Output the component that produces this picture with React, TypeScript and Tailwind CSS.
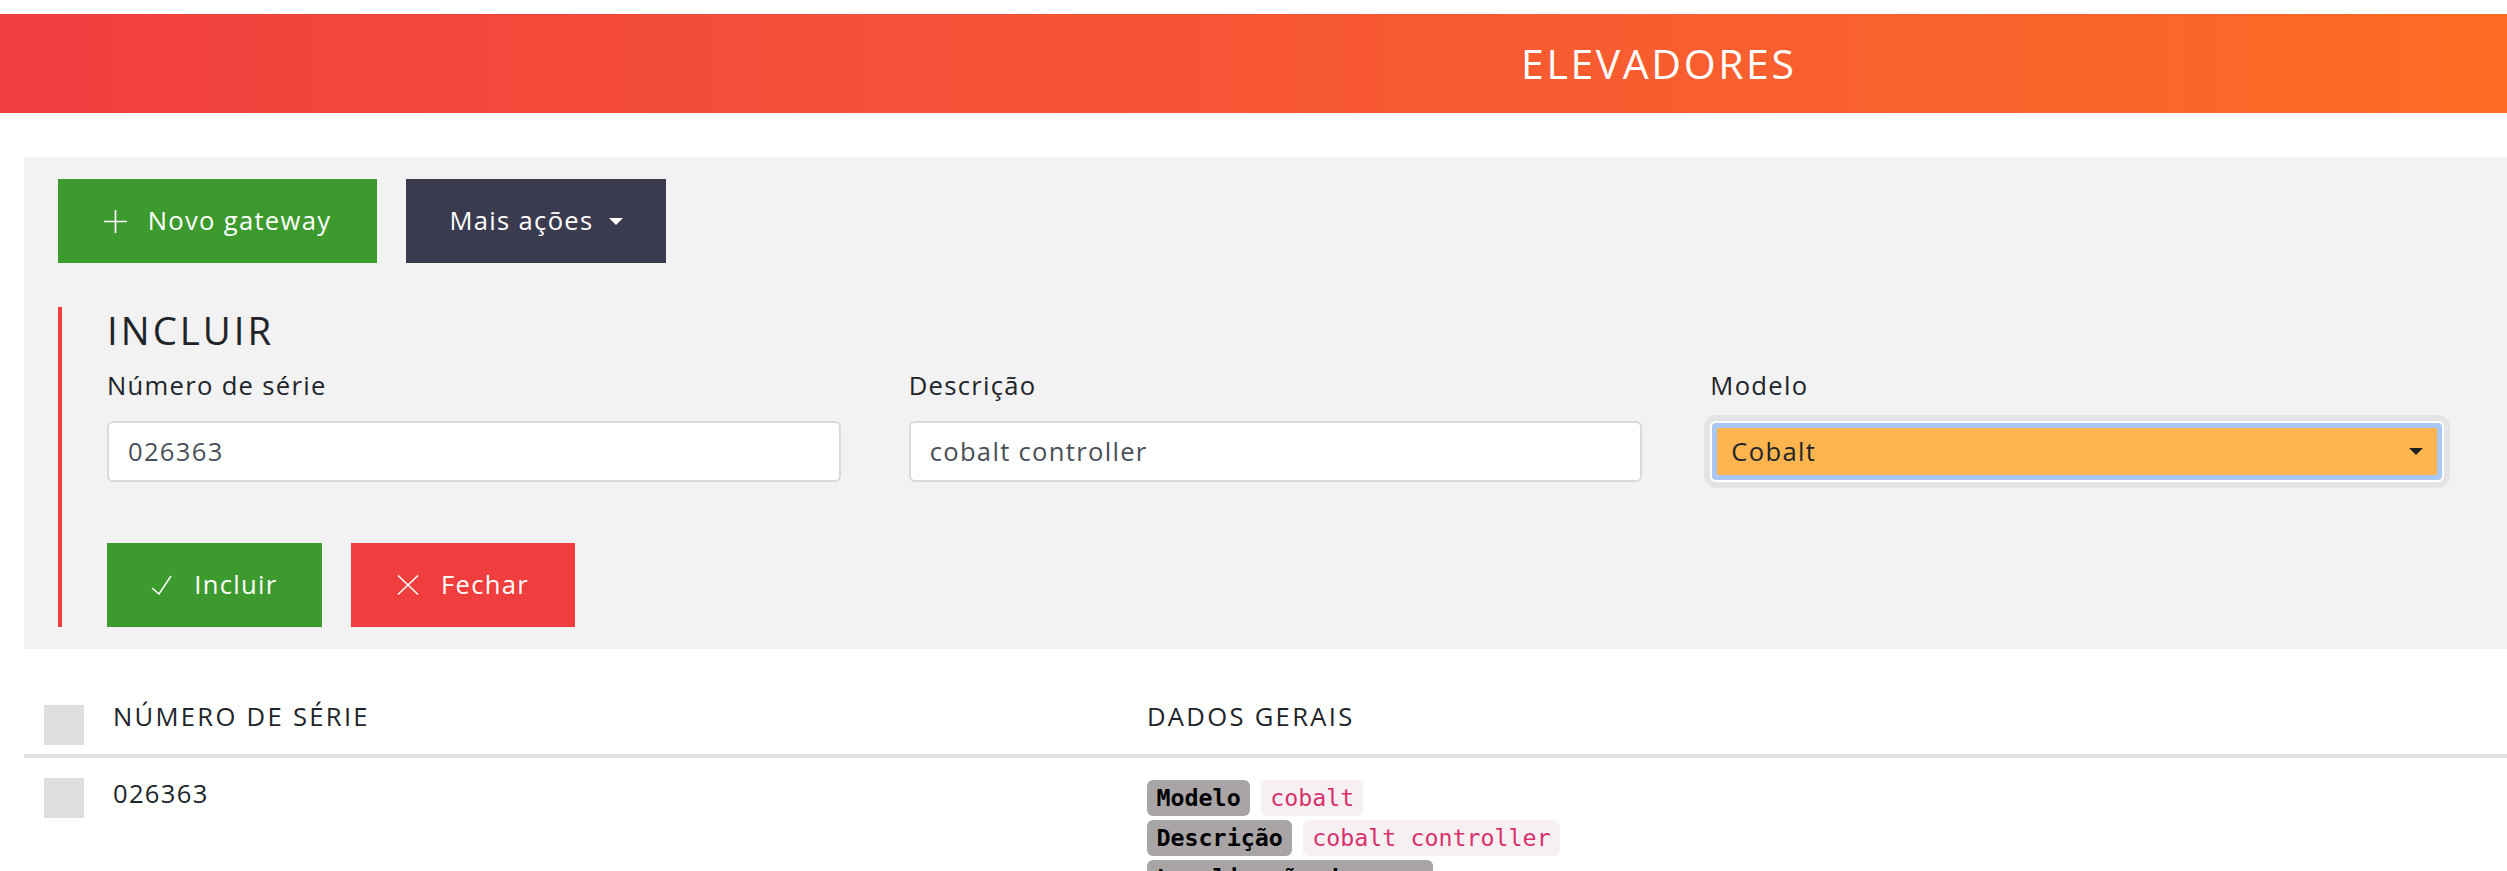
import React from "react";

function PlusIcon() {
  return (
    <svg width="23" height="23" viewBox="0 0 23 23" fill="none" stroke="currentColor" strokeWidth="1.7">
      <path d="M11.5 0 V23 M0 11.5 H23" />
    </svg>
  );
}

function CheckIcon() {
  return (
    <svg width="21" height="20" viewBox="0 0 21 20" fill="none" stroke="currentColor" strokeWidth="1.5">
      <path d="M1 13 L8 19 L20 1" />
    </svg>
  );
}

function CloseIcon() {
  return (
    <svg width="22" height="20" viewBox="0 0 22 20" fill="none" stroke="currentColor" strokeWidth="1.5">
      <path d="M1 0.5 L21 19.5 M21 0.5 L1 19.5" />
    </svg>
  );
}

function Caret({ className }: { className?: string }) {
  return (
    <svg width="14" height="7" viewBox="0 0 14 7" className={className}>
      <path d="M0 0 H14 L7 7 Z" fill="currentColor" />
    </svg>
  );
}

function Field({ label, value }: { label: string; value: string }) {
  return (
    <div className="flex flex-col">
      <label className="text-[25.6px] leading-[38.4px] text-[#212529] mb-[16px]">{label}</label>
      <div className="h-[61px] rounded-[6px] border-2 border-[#d6d9dd] bg-white flex items-center px-[19px] text-[25.6px] text-[#495057]">
        {value}
      </div>
    </div>
  );
}

function Tag({ k, v }: { k: string; v?: string }) {
  return (
    <div className="flex gap-[11px] font-['DejaVu_Sans_Mono',monospace] text-[23.3px] tracking-normal">
      <span className="h-[36px] flex items-center px-[9.5px] rounded-[6px] bg-[#a9a5a6] text-black font-bold">{k}</span>
      {v ? (
        <span className="h-[36px] flex items-center px-[9px] rounded-[6px] bg-[#f7f0f3] text-[#d6336c]">{v}</span>
      ) : null}
    </div>
  );
}

export default function App() {
  return (
    <div className="min-h-screen bg-white font-['Open_Sans',sans-serif] tracking-[1.3px] text-[#212529] pt-[14px] overflow-hidden">
      <header className="h-[99px] bg-linear-to-r from-[#f03e3f] to-[#fc6b23] flex items-center pl-[1521px]">
        <h1 className="text-[41px] leading-none tracking-[2.6px] text-white font-normal">ELEVADORES</h1>
      </header>

      <section className="ml-[24px] mt-[44px] bg-[#f2f2f2] pt-[22px] pb-[22px] pl-[34px] pr-[63px]">
        <div className="flex gap-[29px]">
          <button className="w-[319px] h-[84px] bg-[#3d9a2f] text-white text-[25.6px] flex items-center justify-center gap-[21px]">
            <PlusIcon />
            <span>Novo gateway</span>
          </button>
          <button className="w-[260px] h-[84px] bg-[#3b3b50] text-white text-[25.6px] flex items-center justify-center gap-[15px]">
            <span>Mais ações</span>
            <Caret />
          </button>
        </div>

        <div className="mt-[44px] border-l-4 border-[#f03e3f] pl-[45px]">
          <h2 className="text-[38.4px] leading-[46px] tracking-[3px] font-normal mb-[14px]">INCLUIR</h2>
          <div className="grid grid-cols-3 gap-x-[68px]">
            <Field label="Número de série" value="026363" />
            <Field label="Descrição" value="cobalt controller" />
            <div className="flex flex-col">
              <label className="text-[25.6px] leading-[38.4px] text-[#212529] mb-[16px]">Modelo</label>
              <div className="h-[61px] rounded-[6px] border-2 border-white bg-[#ffb54f] flex items-center justify-between px-[19px] text-[25.6px] text-[#212529] shadow-[0_0_0_6px_#e4e4e6,inset_0_0_0_5px_#a8c8f8]">
                <span>Cobalt</span>
                <Caret className="text-[#222]" />
              </div>
            </div>
          </div>
          <div className="flex gap-[29px] mt-[61px]">
            <button className="w-[215px] h-[84px] bg-[#3d9a2f] text-white text-[25.6px] flex items-center justify-center gap-[22px]">
              <CheckIcon />
              <span>Incluir</span>
            </button>
            <button className="w-[224px] h-[84px] bg-[#f03e3f] text-white text-[25.6px] flex items-center justify-center gap-[22px]">
              <CloseIcon />
              <span>Fechar</span>
            </button>
          </div>
        </div>
      </section>

      <div className="ml-[24px]">
        <div className="flex items-start pl-[20px] pt-[49px] pb-[9px] border-b-4 border-[#dee2e6]">
          <div className="mt-[7px] w-[40px] h-[40px] bg-[#dedede] shrink-0" />
          <div className="ml-[29px] w-[1034px] text-[25.6px] leading-[38.4px] tracking-[2.3px] font-medium">NÚMERO DE SÉRIE</div>
          <div className="text-[25.6px] leading-[38.4px] tracking-[2.3px] font-medium">DADOS GERAIS</div>
        </div>
        <div className="flex items-start pl-[20px]">
          <div className="mt-[20px] w-[40px] h-[40px] bg-[#dedede] shrink-0" />
          <div className="ml-[29px] w-[1034px] pt-[17px] text-[25.6px] leading-[38.4px]">026363</div>
          <div className="pt-[22px] flex flex-col gap-[4px]">
            <Tag k="Modelo" v="cobalt" />
            <Tag k="Descrição" v="cobalt controller" />
            <Tag k="Localização do poço" />
          </div>
        </div>
      </div>
    </div>
  );
}
